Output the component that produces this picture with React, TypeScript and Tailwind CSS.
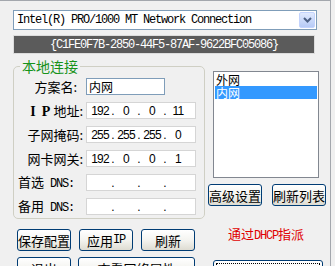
const cjk = "font-['Noto_Sans_CJK_SC','Noto_Sans',sans-serif]";
const mono = "font-['Liberation_Mono','Noto_Sans_CJK_SC',monospace]";

const XpButton = ({
  label,
  className = "",
}: {
  label: React.ReactNode;
  className?: string;
}) => (
  <button
    className={`h-[22px] border border-[#003c74] rounded-[3px] bg-gradient-to-b from-white via-[#f4f4f0] to-[#dedcd2] text-[13px] leading-[13px] text-black flex items-center justify-center ${className}`}
  >
    {label}
  </button>
);

const IpBox = ({ parts }: { parts: string[] }) => (
  <div className="w-[110px] h-[17px] bg-white border border-[#d5d5d5] flex items-center pl-[2px] font-['Liberation_Sans',sans-serif] text-[12px] leading-none">
    {parts.map((p, i) => (
      <div key={i} className="flex items-center">
        {i > 0 && <div className="w-[4px] text-center">.</div>}
        <div className="w-[22px] text-center tracking-[-0.8px]">{p}</div>
      </div>
    ))}
  </div>
);

const rows: { label: React.ReactNode; pr: string; parts: string[] }[] = [
  {
    label: (
      <>
        <span className="font-['Liberation_Serif',serif] font-bold text-[14px]">I</span>
        <span className="font-['Liberation_Serif',serif] font-bold text-[14px] ml-[6px] mr-[3px]">P</span>
        地址:
      </>
    ),
    pr: "pr-[3px]",
    parts: ["192", "0", "0", "11"],
  },
  { label: "子网掩码:", pr: "pr-[3px]", parts: ["255", "255", "255", "0"] },
  { label: "网卡网关:", pr: "pr-[3px]", parts: ["192", "0", "0", "1"] },
  {
    label: (
      <>
        首选<span className={`${mono} text-[12px] tracking-[-1.2px] ml-[6px]`}>DNS:</span>
      </>
    ),
    pr: "pr-[12px]",
    parts: ["", "", "", ""],
  },
  {
    label: (
      <>
        备用<span className={`${mono} text-[12px] tracking-[-1.2px] ml-[6px]`}>DNS:</span>
      </>
    ),
    pr: "pr-[12px]",
    parts: ["", "", "", ""],
  },
];

export default function App() {
  return (
    <div className={`w-[335px] h-[266px] overflow-hidden bg-[#f0f0f0] text-black ${cjk}`}>
      <div className="w-[331px] h-[266px] border-t border-r border-[#a3a7ad] pl-[13px] pt-[9px]">
        {/* adapter combo */}
        <div className="w-[304px] h-[20px] bg-white border border-[#7f9db9] flex items-center">
          <span className={`${mono} text-[12px] tracking-[-1.2px] pl-[3px] whitespace-nowrap`}>
            Intel(R) PRO/1000 MT Network Connection
          </span>
          <div className="ml-auto mr-[1px] w-[16px] h-[16px] rounded-[2px] border border-[#c3d3fd] bg-gradient-to-b from-[#e1eafe] to-[#b6caf6] flex items-center justify-center">
            <svg width="9" height="6" viewBox="0 0 9 6">
              <path d="M1 1 L4.5 4.5 L8 1" fill="none" stroke="#4d6185" strokeWidth="2" />
            </svg>
          </div>
        </div>

        {/* guid */}
        <div className="mt-[5px] w-[302px] h-[19px] bg-[#5b5b5b] border border-[#dcdcdc] flex items-center justify-center">
          <span className={`${mono} text-[12px] tracking-[-1.2px] text-white whitespace-nowrap`}>
            {"{C1FE0F7B-2850-44F5-87AF-9622BFC05086}"}
          </span>
        </div>

        <div className="flex">
          {/* left column */}
          <div className="w-[192px]">
            <fieldset className="mt-[5px] w-[192px] border border-[#cfcfc4] rounded-[5px] pb-[3px]">
              <legend className="ml-[6px] px-[2px] text-[14px] leading-[14px] text-[#17931a]">本地连接</legend>
              <div className="pt-[5px] flex flex-col gap-[7px]">
                <div className="flex items-center h-[17px]">
                  <div className="w-[72px] text-right pr-[9px] text-[13px] leading-[13px]">方案名:</div>
                  <div className="w-[79px] h-[17px] bg-white border border-[#7f9db9] text-[12px] leading-[15px] pl-[2px]">
                    内网
                  </div>
                </div>
                {rows.map((r, i) => (
                  <div key={i} className="flex items-center h-[17px]">
                    <div className={`w-[72px] text-right ${r.pr} text-[13px] leading-[13px] whitespace-nowrap`}>
                      {r.label}
                    </div>
                    <IpBox parts={r.parts} />
                  </div>
                ))}
              </div>
            </fieldset>

            <div className="mt-[10px] ml-[4px] flex gap-[8px]">
              <XpButton label="保存配置" className="w-[54px]" />
              <XpButton
                label={
                  <>
                    应用<span className={`${mono} text-[12px] tracking-[-1.2px]`}>IP</span>
                  </>
                }
                className="w-[54px]"
              />
              <XpButton label="刷新" className="w-[54px]" />
            </div>
            <div className="mt-[6px] ml-[4px] flex gap-[7px]">
              <XpButton label="退出" className="w-[54px]" />
              <XpButton label="查看网络属性" className="w-[117px]" />
            </div>
          </div>

          {/* right column */}
          <div className="ml-[3px]">
            <div className="mt-[17px] ml-[5px] w-[106px] h-[107px] bg-white border border-[#828790] pt-[1px] text-[12px] leading-[13px]">
              <div className="mx-[1px] pl-[1px] h-[13px]">外网</div>
              <div className="mx-[1px] pl-[1px] h-[13px] bg-[#3399ff] text-white">内网</div>
            </div>
            <div className="mt-[6px] flex gap-[10px]">
              <XpButton label="高级设置" className="w-[54px]" />
              <XpButton label="刷新列表" className="w-[54px]" />
            </div>
            <div className="mt-[21px] ml-[20px] text-[13px] leading-[14px] text-[#e00000] whitespace-nowrap">
              通过<span className={`${mono} text-[12px] tracking-[-1.2px]`}>DHCP</span>指派
            </div>
            <div className="mt-[17px] ml-[5px] w-[110px] h-[22px] border border-[#003c74] rounded-[3px] bg-gradient-to-b from-white to-[#eeede8] p-[2px]">
              <div className="w-full h-full border border-dotted border-black" />
            </div>
          </div>
        </div>
      </div>
    </div>
  );
}
